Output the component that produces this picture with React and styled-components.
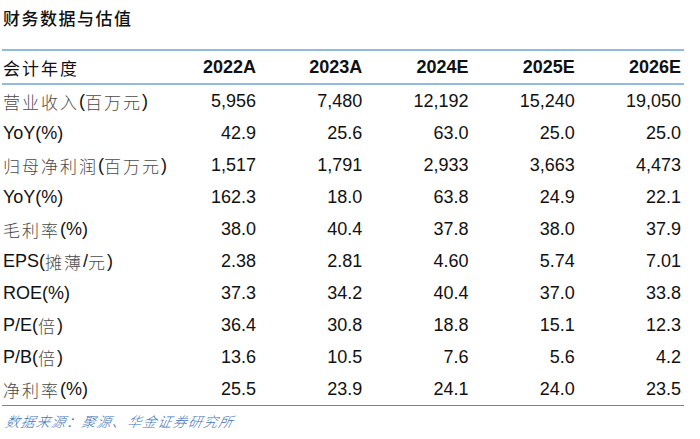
import React from "react";
import styled, { createGlobalStyle } from "styled-components";

const Global = createGlobalStyle`
  html, body { margin: 0; padding: 0; background: #fff; }
  body { font-family: "Liberation Sans", Arial, "Noto Sans CJK SC", sans-serif; }
`;

const Page = styled.div`
  width: 700px;
  height: 439px;
  padding: 0 0 0 2px;
  box-sizing: border-box;
  display: flex;
  flex-direction: column;
`;

const Title = styled.div`
  height: 49px;
  padding: 6px 0 0 1px;
  box-sizing: border-box;
  font-family: "Noto Sans CJK SC", sans-serif;
  font-size: 17px;
  font-weight: 500;
  letter-spacing: 1.5px;
  color: #111;
  line-height: 24px;
`;

const Table = styled.div`
  width: 682px;
  display: grid;
  grid-template-columns: 150.75px repeat(5, 106.25px);
  border-bottom: 1px solid #4f8fd6;
`;

const Cell = styled.div`
  height: 32px;
  display: flex;
  align-items: center;
  justify-content: ${(p) => (p.$label ? "flex-start" : "flex-end")};
  padding: ${(p) => (p.$label ? "0 0 0 1px" : "0 3px 0 0")};
  font-size: 18px;
  font-weight: ${(p) => (p.$head ? 700 : 400)};
  color: #111;
  white-space: nowrap;
  ${(p) =>
    p.$head
      ? `border-top: 2px solid #8fbbe0; border-bottom: 2px solid #8fbbe0; box-sizing: content-box;`
      : ``}
`;

const Cjk = styled.span`
  font-family: "Noto Sans CJK SC", sans-serif;
  font-weight: ${(p) => (p.$bold ? 400 : 300)};
  color: ${(p) => (p.$bold ? "#111" : "#4a4a4a")};
  font-size: 17px;
  letter-spacing: 2px;
`;

const Source = styled.div`
  margin-top: 5px;
  padding-left: 2px;
  font-family: "Noto Sans CJK SC", sans-serif;
  font-style: italic;
  font-weight: 300;
  font-size: 14px;
  letter-spacing: 1.2px;
  color: #3f74b8;
  transform: skewX(-12deg);
  transform-origin: left bottom;
`;

const renderLabel = (text, bold) =>
  text.split(/([\u4e00-\u9fff]+)/).map((part, i) =>
    /[\u4e00-\u9fff]/.test(part) ? (
      <Cjk key={i} $bold={bold}>
        {part}
      </Cjk>
    ) : (
      <span key={i}>{part}</span>
    )
  );

const header = ["会计年度", "2022A", "2023A", "2024E", "2025E", "2026E"];

const rows = [
  ["营业收入(百万元)", "5,956", "7,480", "12,192", "15,240", "19,050"],
  ["YoY(%)", "42.9", "25.6", "63.0", "25.0", "25.0"],
  ["归母净利润(百万元)", "1,517", "1,791", "2,933", "3,663", "4,473"],
  ["YoY(%)", "162.3", "18.0", "63.8", "24.9", "22.1"],
  ["毛利率(%)", "38.0", "40.4", "37.8", "38.0", "37.9"],
  ["EPS(摊薄/元)", "2.38", "2.81", "4.60", "5.74", "7.01"],
  ["ROE(%)", "37.3", "34.2", "40.4", "37.0", "33.8"],
  ["P/E(倍)", "36.4", "30.8", "18.8", "15.1", "12.3"],
  ["P/B(倍)", "13.6", "10.5", "7.6", "5.6", "4.2"],
  ["净利率(%)", "25.5", "23.9", "24.1", "24.0", "23.5"],
];

export default function App() {
  return (
    <Page>
      <Global />
      <Title>财务数据与估值</Title>
      <Table>
        {header.map((h, i) => (
          <Cell key={"h" + i} $head $label={i === 0}>
            {i === 0 ? renderLabel(h, true) : h}
          </Cell>
        ))}
        {rows.map((r, ri) =>
          r.map((c, ci) => (
            <Cell key={ri + "-" + ci} $label={ci === 0}>
              {ci === 0 ? renderLabel(c, false) : c}
            </Cell>
          ))
        )}
      </Table>
      <Source>数据来源：聚源、华金证券研究所</Source>
    </Page>
  );
}
